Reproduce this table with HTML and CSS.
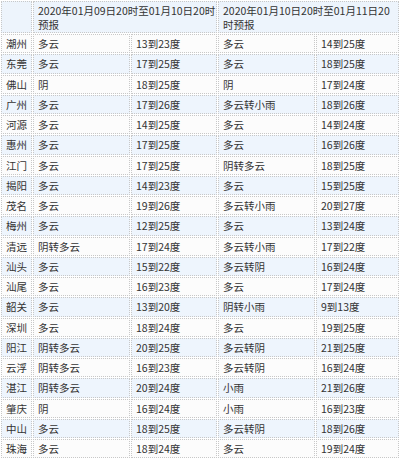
FILE: index.html
```html
<!DOCTYPE html>
<html lang="zh-CN">
<head>
<meta charset="utf-8">
<link rel="stylesheet" href="styles.css">
</head>
<body>
<table class="forecast">
  <colgroup>
    <col class="c-city">
    <col class="c-wx">
    <col class="c-temp">
    <col class="c-wx">
    <col class="c-temp2">
  </colgroup>
  <thead>
    <tr class="head">
      <td></td>
      <td colspan="2">2020年01月09日20时至01月10日20时<br>预报</td>
      <td colspan="2">2020年01月10日20时至01月11日20<br>时预报</td>
    </tr>
  </thead>
  <tbody>
    <tr><td>潮州</td><td>多云</td><td>13到23度</td><td>多云</td><td>14到25度</td></tr>
    <tr><td>东莞</td><td>多云</td><td>17到25度</td><td>多云</td><td>18到25度</td></tr>
    <tr><td>佛山</td><td>阴</td><td>18到25度</td><td>阴</td><td>17到24度</td></tr>
    <tr><td>广州</td><td>多云</td><td>17到26度</td><td>多云转小雨</td><td>18到26度</td></tr>
    <tr><td>河源</td><td>多云</td><td>14到25度</td><td>多云</td><td>14到24度</td></tr>
    <tr><td>惠州</td><td>多云</td><td>17到25度</td><td>多云</td><td>16到26度</td></tr>
    <tr><td>江门</td><td>多云</td><td>17到25度</td><td>阴转多云</td><td>18到25度</td></tr>
    <tr><td>揭阳</td><td>多云</td><td>14到23度</td><td>多云</td><td>15到25度</td></tr>
    <tr><td>茂名</td><td>多云</td><td>19到26度</td><td>多云转小雨</td><td>20到27度</td></tr>
    <tr><td>梅州</td><td>多云</td><td>12到25度</td><td>多云</td><td>13到24度</td></tr>
    <tr><td>清远</td><td>阴转多云</td><td>17到24度</td><td>多云转小雨</td><td>17到22度</td></tr>
    <tr><td>汕头</td><td>多云</td><td>15到22度</td><td>多云转阴</td><td>16到24度</td></tr>
    <tr><td>汕尾</td><td>多云</td><td>16到23度</td><td>多云</td><td>17到24度</td></tr>
    <tr><td>韶关</td><td>多云</td><td>13到20度</td><td>阴转小雨</td><td>9到13度</td></tr>
    <tr><td>深圳</td><td>多云</td><td>18到24度</td><td>多云</td><td>19到25度</td></tr>
    <tr><td>阳江</td><td>阴转多云</td><td>20到25度</td><td>多云转阴</td><td>21到25度</td></tr>
    <tr><td>云浮</td><td>阴转多云</td><td>16到23度</td><td>多云转阴</td><td>16到24度</td></tr>
    <tr><td>湛江</td><td>阴转多云</td><td>20到24度</td><td>小雨</td><td>21到26度</td></tr>
    <tr><td>肇庆</td><td>阴</td><td>16到24度</td><td>小雨</td><td>16到23度</td></tr>
    <tr><td>中山</td><td>多云</td><td>18到25度</td><td>多云转阴</td><td>18到26度</td></tr>
    <tr><td>珠海</td><td>多云</td><td>18到24度</td><td>多云</td><td>19到24度</td></tr>
  </tbody>
</table>
</body>
</html>
```

FILE: styles.css
```css
html, body {
  margin: 0;
  padding: 0;
  background: #ffffff;
}

.forecast {
  width: 400px;
  table-layout: fixed;
  border-collapse: separate;
  border-spacing: 1px;
  font-family: "Noto Sans CJK SC", "Liberation Sans", sans-serif;
  font-size: 10.5px;
  color: #333333;
}

.c-city { width: 31px; }
.c-wx { width: 97px; }
.c-temp { width: 86px; }
.c-temp2 { width: 83px; }

.forecast td {
  box-sizing: border-box;
  height: 19.25px;
  padding: 0 4px;
  border: 1px dotted #c8c8c8;
  line-height: 13px;
  vertical-align: middle;
  text-align: left;
  white-space: nowrap;
  overflow: hidden;
}

.forecast tbody tr:nth-child(odd) td {
  background: #fcfcfc;
}

.forecast tbody tr:nth-child(even) td {
  background: #eef5fd;
}

.forecast .head td {
  height: 31px;
  background: #edf4fc;
  vertical-align: top;
  line-height: 14px;
  padding-top: 2px;
}
```
